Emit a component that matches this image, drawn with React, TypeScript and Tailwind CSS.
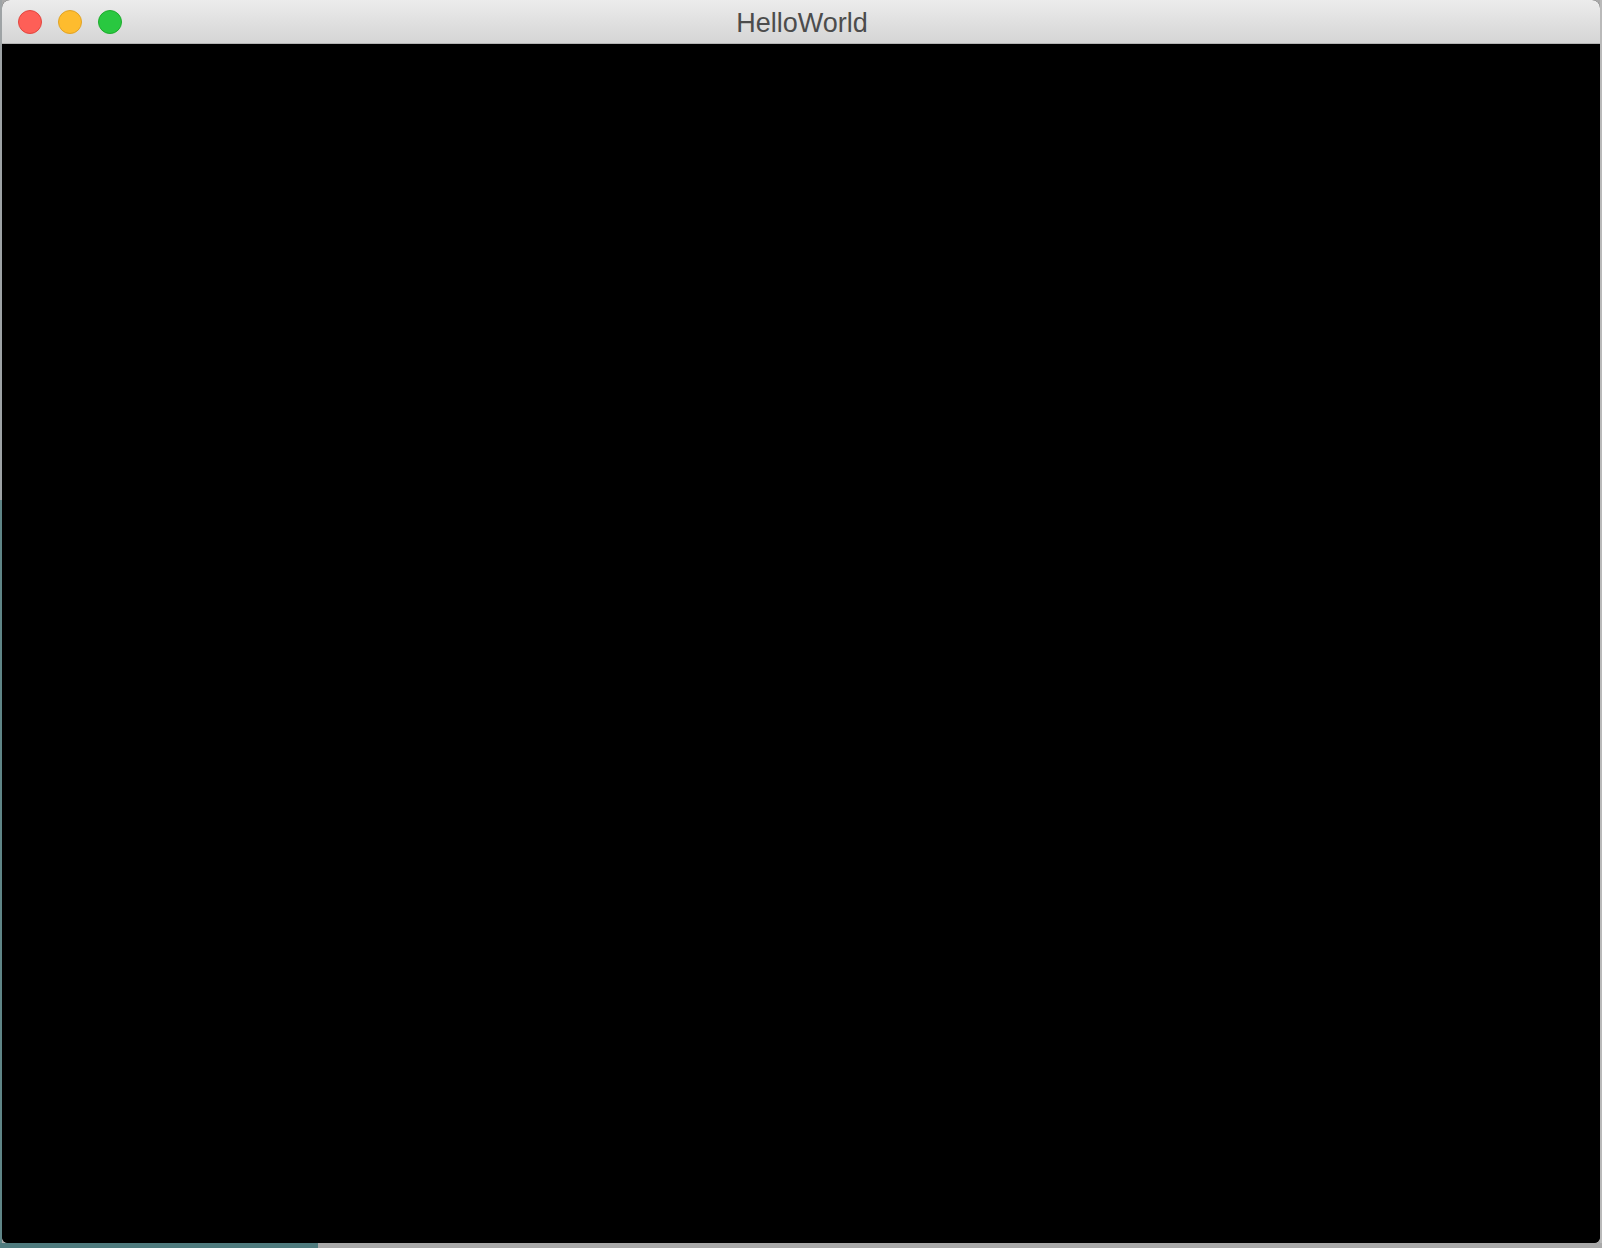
import React from 'react';

// Empty macOS window titled "HelloWorld" over a desktop edge
const TrafficLight: React.FC<{ fill: string }> = ({ fill }) => (
  <span className={`block h-[24px] w-[24px] rounded-full border ${fill}`} />
);

export default function App() {
  return (
    <div className="flex h-[1248px] w-[1602px] flex-col overflow-hidden bg-[#a9a9a9]" style={{ fontFamily: '"Liberation Sans", Arial, sans-serif' }}>
      <div className="flex h-[1243px]">
        {/* desktop sliver on the left */}
        <div className="flex w-[2px] flex-col">
          <div className="h-[500px] bg-[#9ea3a5]" />
          <div className="flex-1 bg-[#5f8587]" />
        </div>

        {/* window */}
        <div className="flex w-[1598px] flex-col overflow-hidden rounded-t-[8px] rounded-b-[6px] bg-black">
          <div className="relative flex h-[44px] items-center border-b border-[#b4b4b4] bg-gradient-to-b from-[#ececec] to-[#d5d5d5] px-[16px] pt-[1px]">
            <div className="flex gap-[16px]">
              <TrafficLight fill="bg-[#fe5f57] border-[#e2463f]" />
              <TrafficLight fill="bg-[#febc2e] border-[#e1a325]" />
              <TrafficLight fill="bg-[#29c840] border-[#1dac2c]" />
            </div>
            <div className="absolute inset-0 flex items-center justify-center pl-[2px] pt-[3px] text-[27px] leading-none text-[#4c4c4c]">
              HelloWorld
            </div>
          </div>
          <div className="flex-1 bg-black" />
        </div>

        <div className="w-[2px] bg-[#b9b9b9]" />
      </div>

      {/* desktop strip below the window */}
      <div className="flex flex-1">
        <div className="w-[318px] bg-[#4f7b7e]" />
        <div className="flex-1 bg-[#a9a9a9]" />
      </div>
    </div>
  );
}
